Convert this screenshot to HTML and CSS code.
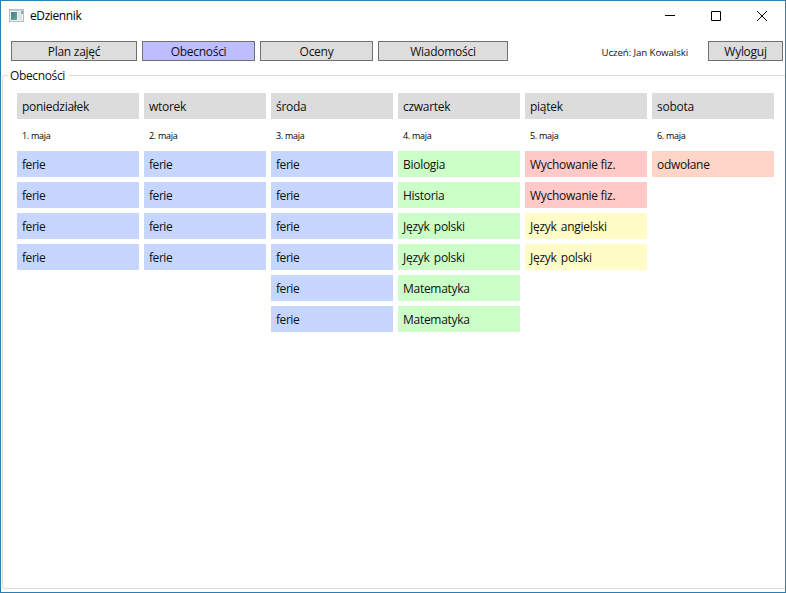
FILE: index.html
```html
<!DOCTYPE html>
<html lang="pl">
<head>
<meta charset="utf-8">
<title>eDziennik</title>
<link rel="stylesheet" href="styles.css">
</head>
<body>
<div class="window">
  <header class="titlebar">
    <svg class="app-icon" width="16" height="14" viewBox="0 0 16 14">
      <defs><linearGradient id="pane" x1="0" y1="0" x2="1" y2="1"><stop offset="0" stop-color="#4a7798"/><stop offset="1" stop-color="#65ae8b"/></linearGradient></defs>
      <rect x=".5" y=".5" width="14" height="12" fill="#eef2f4" stroke="#b5bbbf"/>
      <path d="M1 1.5h13" stroke="#cbd3d8"/>
      <rect x="2" y="3" width="6" height="8" fill="url(#pane)"/>
      <rect x="9" y="3" width="4" height="8" fill="#dce5ea"/>
      <path d="M12 2h2v3h-2z" fill="#8dafa9"/>
    </svg>
    <span class="title">eDziennik</span>
    <div class="controls">
      <svg width="10" height="10" viewBox="0 0 10 10"><path d="M0 4.5h10"/></svg>
      <svg width="10" height="10" viewBox="0 0 10 10"><path d="M.5.5h9v9h-9z"/></svg>
      <svg width="10" height="10" viewBox="0 0 10 10"><path d="M0 0l10 10M10 0L0 10"/></svg>
    </div>
  </header>
  <nav class="toolbar">
    <button class="btn plan">Plan zajęć</button>
    <button class="btn active">Obecności</button>
    <button class="btn">Oceny</button>
    <button class="btn messages">Wiadomości</button>
    <span class="user">Uczeń: Jan Kowalski</span>
    <button class="btn logout">Wyloguj</button>
  </nav>
  <fieldset class="group">
    <legend>Obecności</legend>
    <div class="week">
      <section class="day"><h2>poniedziałek</h2><time>1. maja</time><p class="free">ferie</p><p class="free">ferie</p><p class="free">ferie</p><p class="free">ferie</p></section>
      <section class="day"><h2>wtorek</h2><time>2. maja</time><p class="free">ferie</p><p class="free">ferie</p><p class="free">ferie</p><p class="free">ferie</p></section>
      <section class="day"><h2>środa</h2><time>3. maja</time><p class="free">ferie</p><p class="free">ferie</p><p class="free">ferie</p><p class="free">ferie</p><p class="free">ferie</p><p class="free">ferie</p></section>
      <section class="day"><h2>czwartek</h2><time>4. maja</time><p class="present">Biologia</p><p class="present">Historia</p><p class="present">Język polski</p><p class="present">Język polski</p><p class="present">Matematyka</p><p class="present">Matematyka</p></section>
      <section class="day"><h2>piątek</h2><time>5. maja</time><p class="absent">Wychowanie fiz.</p><p class="absent">Wychowanie fiz.</p><p class="late">Język angielski</p><p class="late">Język polski</p></section>
      <section class="day"><h2>sobota</h2><time>6. maja</time><p class="cancelled">odwołane</p></section>
    </div>
  </fieldset>
</div>
</body>
</html>
```
FILE: styles.css
```css
* { box-sizing: border-box; }
body {
  margin: 0;
  font-family: "Segoe UI", "Open Sans", "Noto Sans", sans-serif;
  font-size: 12px;
  letter-spacing: -0.28px;
  color: #111;
  background: #fff;
}
.window {
  display: flex;
  flex-direction: column;
  width: 786px;
  height: 593px;
  border: 1px solid #2b7fb5;
  background: #fff;
}
.titlebar {
  display: flex;
  align-items: center;
  height: 29px;
  padding: 0 18px 0 8px;
}
.title { margin-left: 5px; color: #000; letter-spacing: -0.4px; }
.controls { display: flex; gap: 36px; margin-left: auto; }
.controls svg { fill: none; stroke: #000; }
.toolbar {
  display: flex;
  gap: 5px;
  margin-top: 11px;
  padding: 0 2px 0 10px;
}
.btn {
  width: 113px;
  height: 20px;
  padding: 1px 0 0;
  border: 1px solid #707070;
  background: #ddd;
  color: #111;
  font: inherit;
  letter-spacing: inherit;
  line-height: 18px;
}
.btn.active { background: #bebdff; }
.plan { width: 126px; }
.messages { width: 130px; }
.logout { width: 75px; margin-left: 15px; }
.user { margin-left: auto; font-size: 9.7px; line-height: 23px; height: 20px; letter-spacing: -0.1px; }
.group {
  flex: 1;
  margin: 6px 0 3px 1px;
  padding: 0 0 0 14px;
  border: 1px solid #d5dfe5;
  border-right: 0;
  border-radius: 3px 0 0 3px;
  min-width: 0;
}
.group legend {
  height: 17px;
  margin-left: -9px;
  padding: 0 4px 0 2px;
  line-height: 17px;
  letter-spacing: -0.36px;
}
.week { display: grid; grid-template-columns: repeat(6, 122px); gap: 5px; padding-top: 9px; }
.day { display: flex; flex-direction: column; gap: 5px; }
.day h2, .day p {
  height: 26px;
  margin: 0;
  padding: 0 5px;
  font-size: 12px;
  font-weight: 400;
  line-height: 27px;
  white-space: nowrap;
}
.day h2 { background: #dcdcdc; }
.day time { height: 22px; padding-left: 5px; font-size: 9px; line-height: 23px; letter-spacing: -0.3px; color: #000; }
.day .free { background: #c7d6ff; letter-spacing: -0.45px; }
.day .present { background: #cbffc7; }
.day .present, .day .late { word-spacing: 1.5px; }
.day .absent { background: #ffc9c7; }
.day .late { background: #fffcc7; }
.day .cancelled { background: #ffd5c7; }
```
